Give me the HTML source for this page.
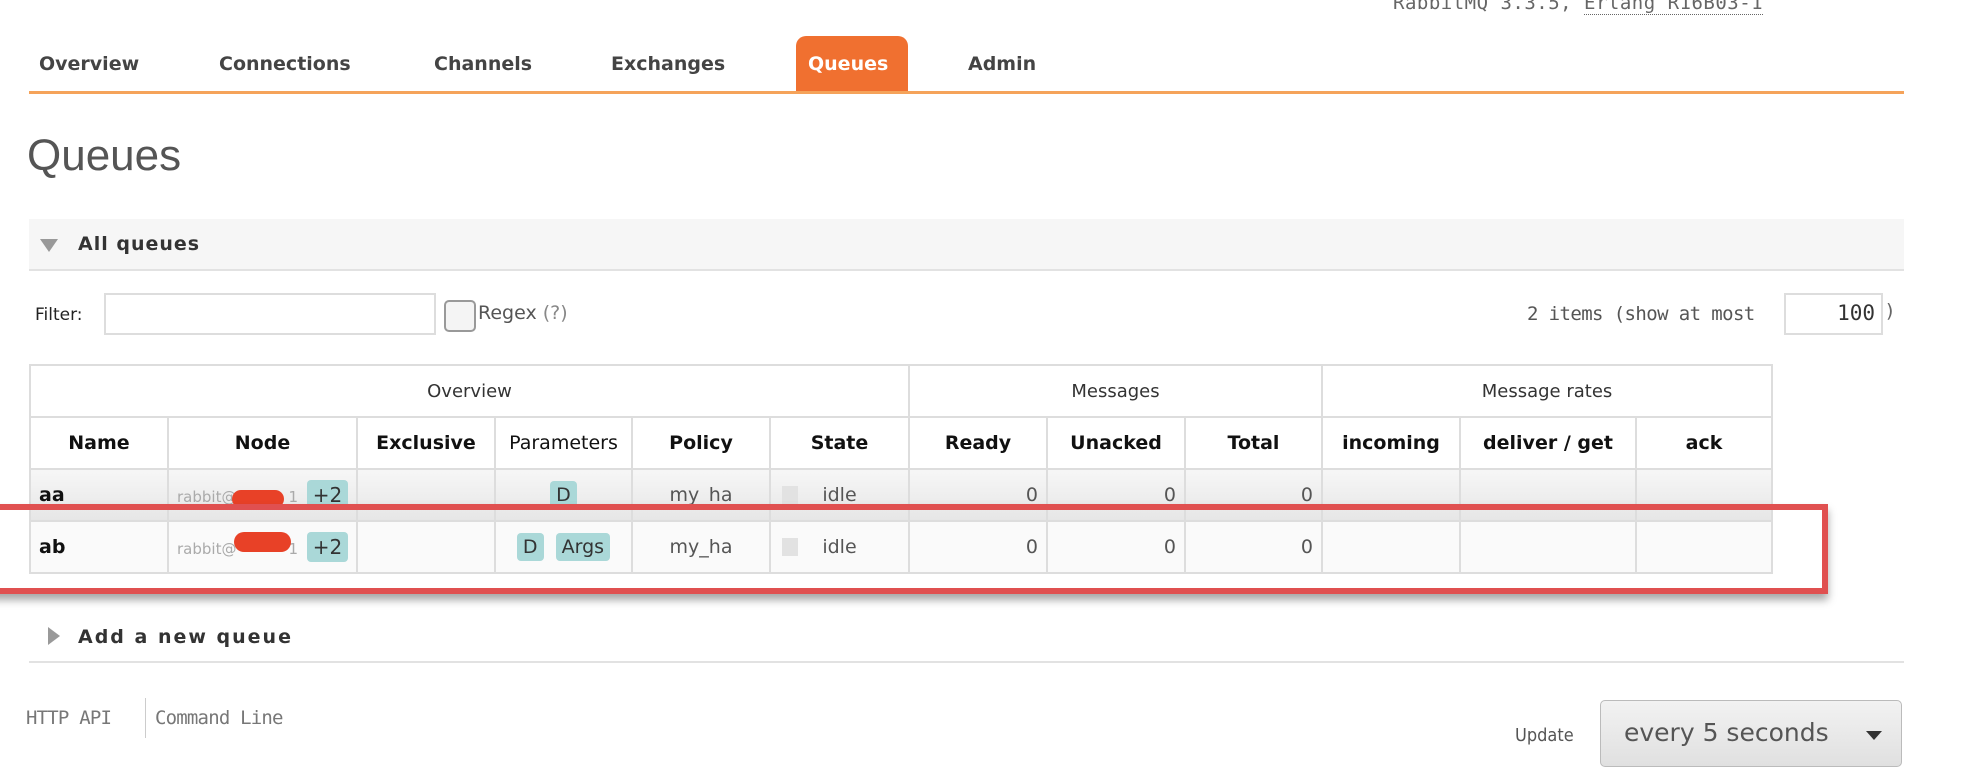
<!DOCTYPE html>
<html><head><meta charset="utf-8"><style>
*{margin:0;padding:0;box-sizing:border-box}
body{width:1970px;height:772px;background:#fff;position:relative;overflow:hidden;font-family:"DejaVu Sans","Liberation Sans",sans-serif;color:#333}
.a{position:absolute;white-space:nowrap}
.nav{font-weight:bold;font-size:19px;color:#444;top:53px}
td,th{border:2px solid #ddd;text-align:center;font-size:19px;height:52px;padding:0}
th{font-weight:bold;color:#111}
table{position:absolute;left:29px;top:364px;border-collapse:collapse;width:1744px}
.b{display:inline-block;background:#aad8d8;border-radius:4px;padding:3px 6px;color:#333;border-bottom:none}
.r{text-align:right;padding-right:8px;color:#555}
</style></head><body>
<div class="a" style="left:1393px;top:-8px;font-size:19px;color:#666;font-family:'DejaVu Sans Mono',monospace;letter-spacing:0.5px">RabbitMQ 3.3.5, <span style="border-bottom:1px dotted #666">Erlang R16B03-1</span></div>
<div class="a nav" style="left:39px">Overview</div>
<div class="a nav" style="left:219px">Connections</div>
<div class="a nav" style="left:434px">Channels</div>
<div class="a nav" style="left:611px">Exchanges</div>
<div class="a" style="left:796px;top:36px;width:112px;height:57px;background:#f07030;border-radius:10px 10px 0 0"></div>
<div class="a nav" style="left:808px;color:#fff">Queues</div>
<div class="a nav" style="left:968px">Admin</div>
<div class="a" style="left:29px;top:91px;width:1875px;height:3px;background:#f5a35a"></div>
<div class="a" style="left:27px;top:131px;font-size:44px;color:#555;font-family:'Liberation Sans',sans-serif">Queues</div>
<div class="a" style="left:29px;top:219px;width:1875px;height:52px;background:#f6f6f6;border-bottom:2px solid #e2e2e2"></div>
<div class="a" style="left:40px;top:239px;width:0;height:0;border-left:9px solid transparent;border-right:9px solid transparent;border-top:13px solid #999"></div>
<div class="a" style="left:78px;top:233px;font-size:19px;font-weight:bold;color:#333;letter-spacing:1px">All queues</div>
<div class="a" style="left:35px;top:305px;font-size:17px;color:#222">Filter:</div>
<div class="a" style="left:104px;top:293px;width:332px;height:42px;border:2px solid #ddd"></div>
<div class="a" style="left:444px;top:300px;width:32px;height:32px;border:2px solid #999;border-radius:5px;background:#f4f4f4"></div>
<div class="a" style="left:478px;top:302px;font-size:19px;color:#555">Regex <span style="color:#888">(?)</span></div>
<div class="a" style="left:1527px;top:303px;font-size:19px;color:#555;font-family:'DejaVu Sans Mono',monospace;letter-spacing:-0.6px">2 items (show at most</div>
<div class="a" style="left:1784px;top:293px;width:99px;height:42px;border:2px solid #ddd;font-size:21px;text-align:right;padding:6px 6px 0 0;font-family:'DejaVu Sans Mono',monospace;color:#333">100</div>
<div class="a" style="left:1886px;top:300px;font-size:19px;color:#666">)</div>
<table>
<tr><td colspan="6" style="color:#333;font-size:18px">Overview</td><td colspan="3" style="font-size:18px">Messages</td><td colspan="3" style="font-size:18px">Message rates</td></tr>
<tr><th style="width:138px">Name</th><th style="width:189px">Node</th><th style="width:138px">Exclusive</th><th style="width:137px;font-weight:normal">Parameters</th><th style="width:138px">Policy</th><th style="width:139px">State</th><th style="width:138px">Ready</th><th style="width:138px">Unacked</th><th style="width:137px">Total</th><th style="width:138px">incoming</th><th style="width:176px">deliver / get</th><th>ack</th></tr>
<tr style="background:linear-gradient(#f7f7f7,#e6e6e6)"><td style="text-align:left;padding-left:8px;font-weight:bold;color:#111">aa</td><td style="text-align:left;padding-left:8px;font-size:15px;color:#aaa">rabbit@<span style="display:inline-block;width:52px"></span>1 <span class="b" style="font-size:20px;margin-left:4px">+2</span></td><td></td><td><span class="b">D</span></td><td style="color:#555">my_ha</td><td style="color:#555">idle</td><td class="r">0</td><td class="r">0</td><td class="r">0</td><td></td><td></td><td></td></tr>
<tr style="background:#fafafa"><td style="text-align:left;padding-left:8px;font-weight:bold;color:#111">ab</td><td style="text-align:left;padding-left:8px;font-size:15px;color:#aaa">rabbit@<span style="display:inline-block;width:52px"></span>1 <span class="b" style="font-size:20px;margin-left:4px">+2</span></td><td></td><td><span class="b">D</span> &nbsp;<span class="b">Args</span></td><td style="color:#555">my_ha</td><td style="color:#555">idle</td><td class="r">0</td><td class="r">0</td><td class="r">0</td><td></td><td></td><td></td></tr>
</table>
<div class="a" style="left:782px;top:486px;width:16px;height:18px;background:#e2e2e2"></div>
<div class="a" style="left:782px;top:538px;width:16px;height:18px;background:#e2e2e2"></div>
<div class="a" style="left:232px;top:490px;width:52px;height:18px;background:#e84127;border-radius:10px"></div>
<div class="a" style="left:234px;top:532px;width:57px;height:20px;background:#e84127;border-radius:11px"></div>
<div class="a" style="left:-10px;top:504px;width:1838px;height:90px;border:6px solid #e05050;box-shadow:0 6px 8px rgba(0,0,0,0.35)"></div>
<div class="a" style="left:48px;top:627px;width:0;height:0;border-top:9px solid transparent;border-bottom:9px solid transparent;border-left:12px solid #999"></div>
<div class="a" style="left:78px;top:626px;font-size:19px;font-weight:bold;color:#333;letter-spacing:2px">Add a new queue</div>
<div class="a" style="left:29px;top:661px;width:1875px;height:2px;background:#e2e2e2"></div>
<div class="a" style="left:26px;top:707px;font-size:19px;color:#777;font-family:'DejaVu Sans Mono',monospace;letter-spacing:-0.8px">HTTP API</div>
<div class="a" style="left:145px;top:698px;width:1px;height:40px;background:#ccc"></div>
<div class="a" style="left:155px;top:707px;font-size:19px;color:#777;font-family:'DejaVu Sans Mono',monospace;letter-spacing:-0.8px">Command Line</div>
<div class="a" style="left:1515px;top:725px;font-size:18px;color:#555;font-family:'DejaVu Sans Condensed','DejaVu Sans',sans-serif">Update</div>
<div class="a" style="left:1600px;top:700px;width:302px;height:67px;border:1px solid #bbb;border-radius:5px;background:linear-gradient(#f2f2f2,#e0e0e0)"></div>
<div class="a" style="left:1624px;top:718px;font-size:25px;color:#555">every 5 seconds</div>
<div class="a" style="left:1866px;top:731px;width:0;height:0;border-left:8px solid transparent;border-right:8px solid transparent;border-top:9px solid #333"></div>
</body></html>
